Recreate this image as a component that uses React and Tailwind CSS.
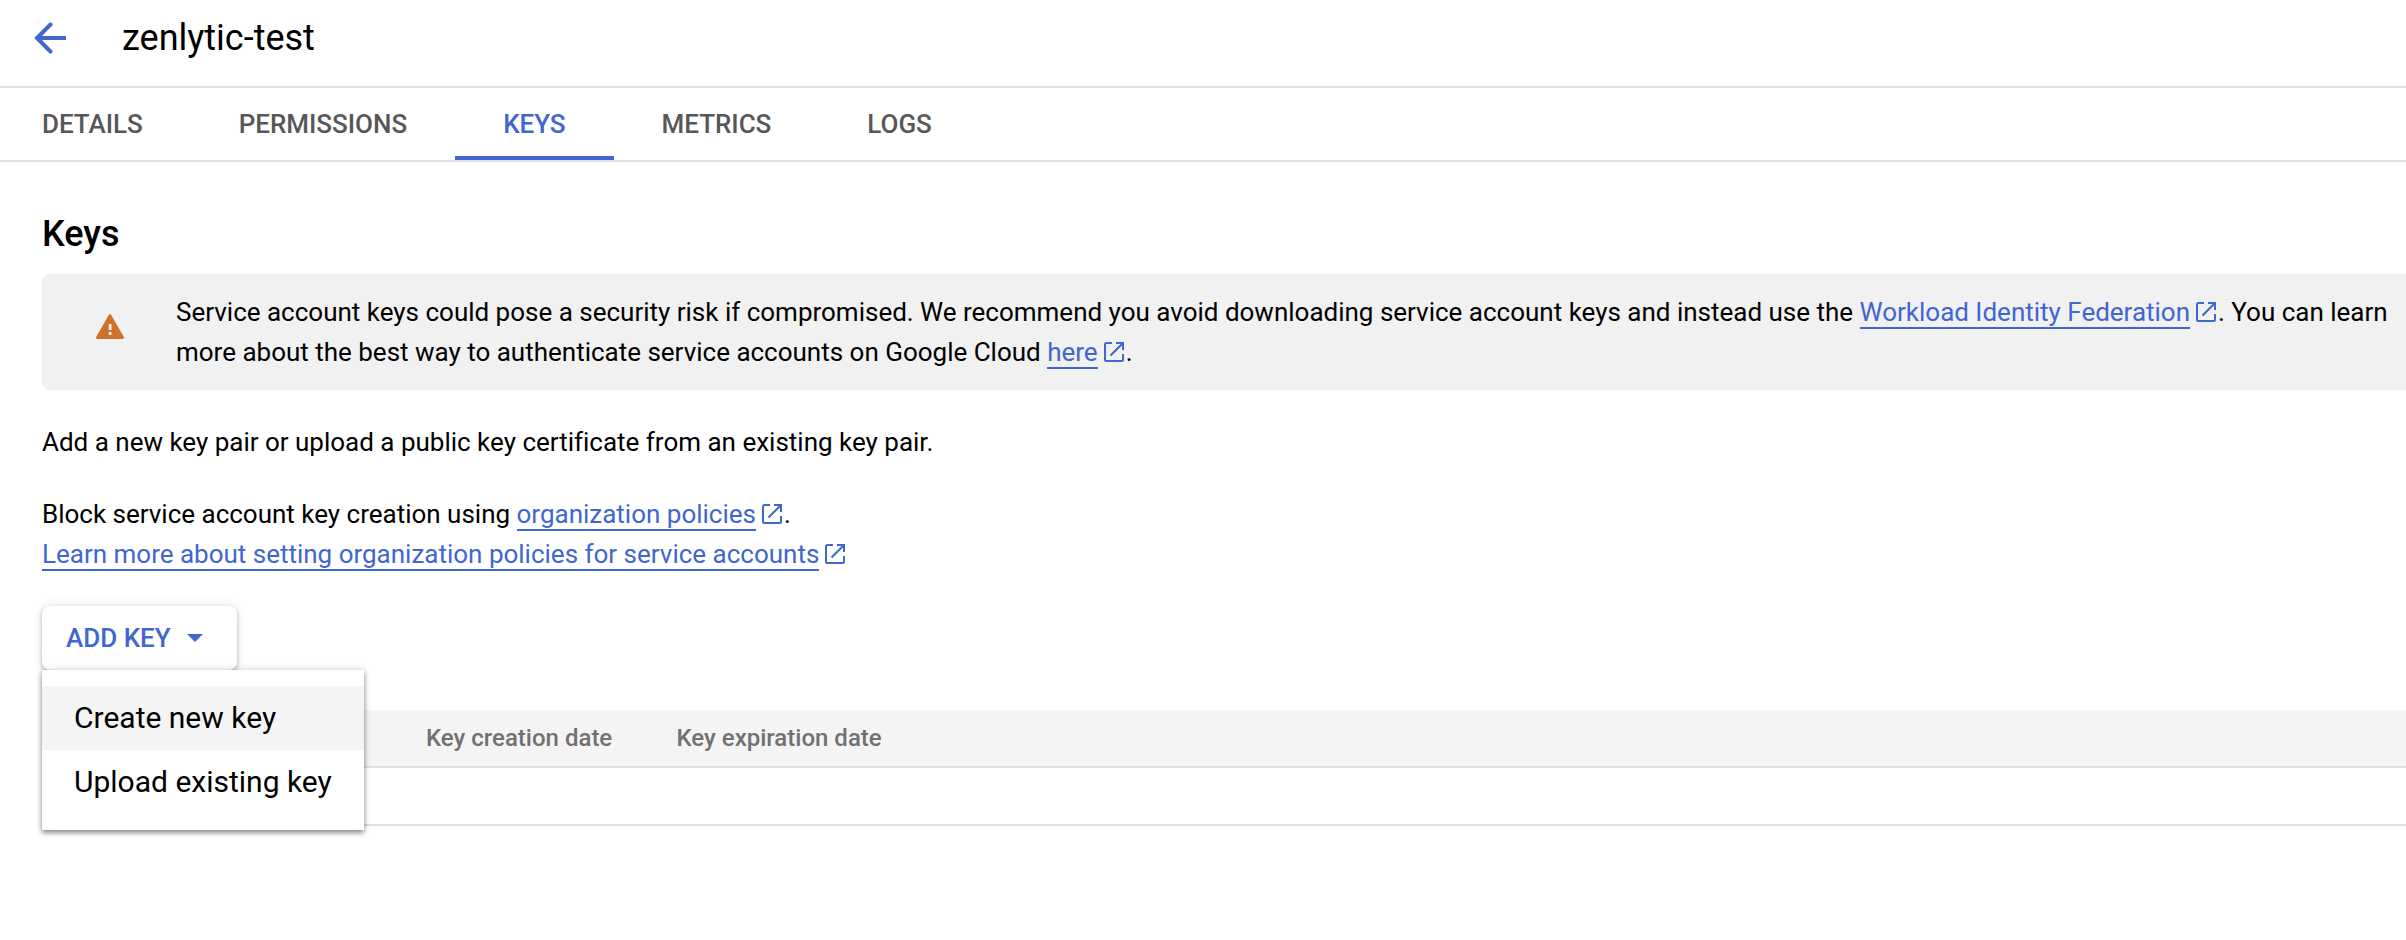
const ExternalIcon = () => (
  <svg viewBox="0 0 20 20" className="ml-1.5 mr-0.5 inline-block size-5 align-[-1px]" fill="none" stroke="#3f66d1" strokeWidth="2">
    <path d="M8 1H2.5Q1 1 1 2.5V17.5Q1 19 2.5 19H17.5Q19 19 19 17.5V12" />
    <path d="M12 1H19V8M19 1L6.5 13.5" />
  </svg>
);

const Link = ({ children }) => (
  <>
    <a className="border-b-2 border-[#3f66d1] text-[#3f66d1]">{children}</a>
    <ExternalIcon />
  </>
);

const tabs = ["DETAILS", "PERMISSIONS", "KEYS", "METRICS", "LOGS"];

export default function App() {
  return (
    <div className="flex h-[940px] w-[2406px] flex-col overflow-hidden bg-white font-['Roboto',sans-serif] text-[26px] leading-10 text-black">
      <header className="flex h-[88px] items-center border-b-2 border-[#e0e0e0] pb-2.5 pl-[34px]">
        <svg viewBox="0 0 32 32" className="size-8" fill="none" stroke="#3f66d1" strokeWidth="4">
          <path d="M32 16H4" />
          <path d="M16.5 2.5L3 16L16.5 29.5" strokeLinecap="round" />
        </svg>
        <h1 className="ml-[56px] text-[36px]">zenlytic-test</h1>
      </header>
      <nav className="flex h-[74px] border-b-2 border-[#e0e0e0]">
        <div className="-ml-[6px] flex tracking-[-0.03px]">
          {tabs.map((t) => (
            <div
              key={t}
              className={
                t === "KEYS"
                  ? "flex items-center border-b-4 border-[#3f66d1] px-12 pt-1 font-medium text-[#3f66d1]"
                  : "flex items-center border-b-4 border-transparent px-12 pt-1 font-medium text-[#575757]"
              }
            >
              {t}
            </div>
          ))}
        </div>
      </nav>
      <main className="flex flex-col pl-[42px]">
        <h2 className="mt-[52px] text-[36px] font-medium">Keys</h2>
        <section className="mt-5 flex h-[116px] rounded-l-lg bg-[#f1f1f1] pt-[18px]">
          <svg viewBox="0 0 28 25" className="ml-[54px] mt-[22px] h-[25px] w-7 shrink-0">
            <path d="M14 0Q14.7 0 15.2 .9L27.7 22.7Q28.5 25 26.5 25H1.5Q-.5 25 .3 22.7L12.8 .9Q13.3 0 14 0Z" fill="#cf7229" />
            <path d="M12.7 10h2.8v6h-2.8zM12.7 18h2.8v3h-2.8z" fill="#f1f1f1" />
          </svg>
          <p className="ml-[52px] whitespace-nowrap tracking-[-0.006px]">
            Service account keys could pose a security risk if compromised. We recommend you avoid downloading service account keys and instead use the{" "}
            <Link>Workload Identity Federation</Link>. You can learn
            <br />
            more about the best way to authenticate service accounts on Google Cloud <Link>here</Link>.
          </p>
        </section>
        <p className="mt-8 tracking-[-0.006px]">Add a new key pair or upload a public key certificate from an existing key pair.</p>
        <p className="mt-8 tracking-[-0.006px]">
          Block service account key creation using <Link>organization policies</Link>.
          <br />
          <Link>Learn more about setting organization policies for service accounts</Link>
        </p>
        <div className="relative mt-8 h-16 w-[195px]">
          <button className="flex h-16 w-[195px] items-center rounded-lg bg-white pl-6 font-medium text-[#3f66d1] shadow-[0_2px_4px_rgba(0,0,0,0.26),0_0_12px_rgba(0,0,0,0.1)]">
            ADD KEY
            <svg viewBox="0 0 16 8" className="ml-4 h-2 w-4">
              <path d="M0 0H16L8 8Z" fill="#3f66d1" />
            </svg>
          </button>
          <div className="absolute left-0 top-16 z-10 flex h-40 w-[322px] flex-col bg-white pt-4 text-[30px] shadow-[0_3px_5px_rgba(0,0,0,0.4),0_0_8px_rgba(0,0,0,0.15)]">
            <div className="flex h-16 items-center bg-[#f4f4f4] pl-8">Create new key</div>
            <div className="flex h-16 items-center pl-8">Upload existing key</div>
          </div>
        </div>
        <div className="mt-10 flex h-[58px] items-center border-b-2 border-[#e0e0e0] bg-[#f4f4f4] pl-[384px] text-[24px] font-medium text-[#717171]">
          <div className="w-[250.5px]">Key creation date</div>
          <div>Key expiration date</div>
        </div>
        <div className="h-[58px] border-b-2 border-[#e0e0e0]" />
      </main>
    </div>
  );
}
